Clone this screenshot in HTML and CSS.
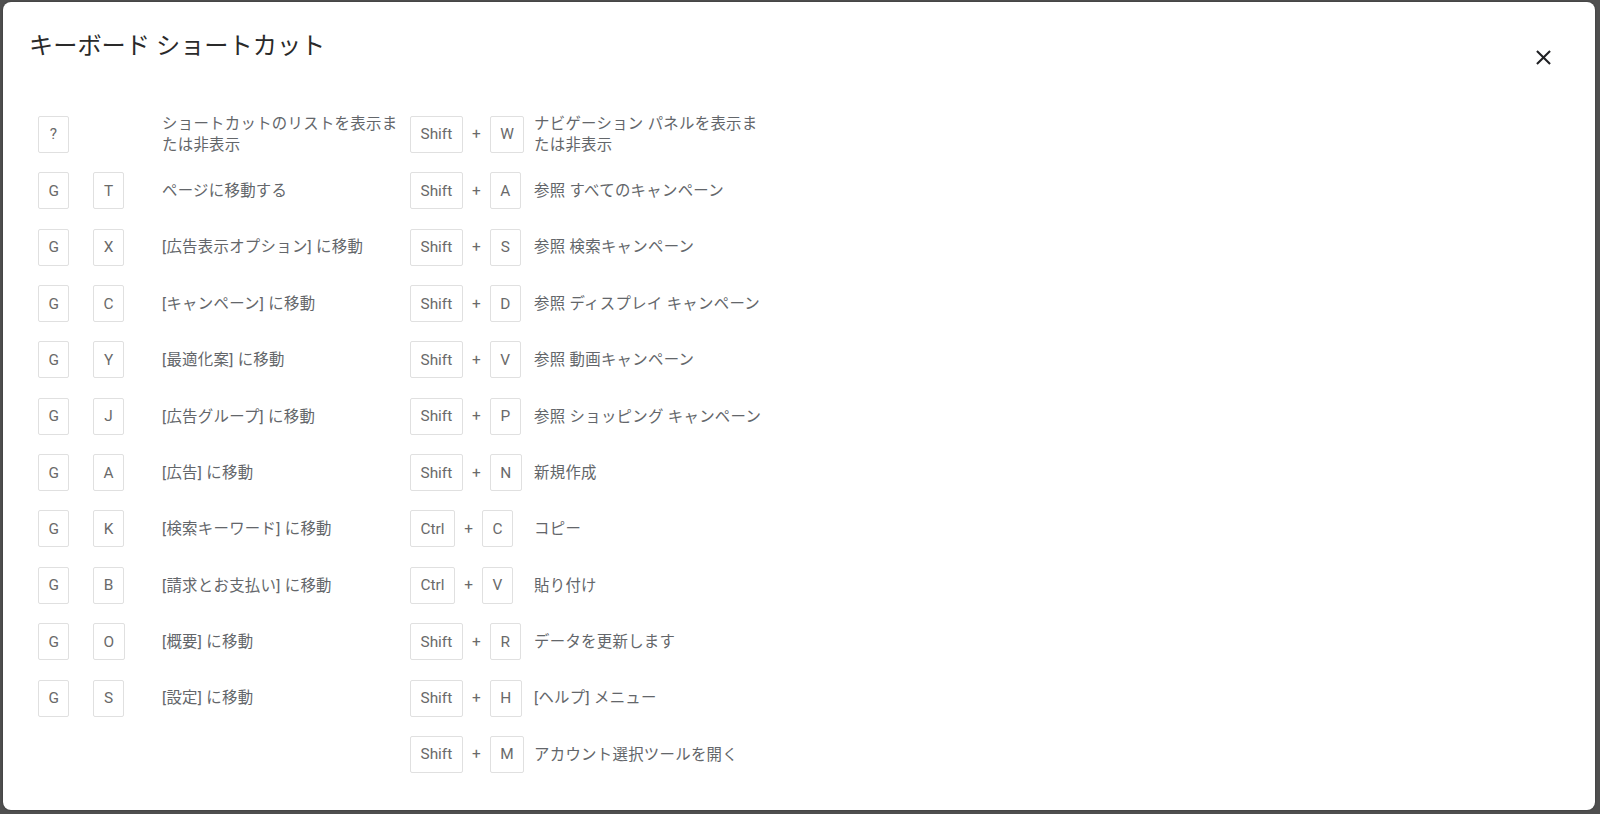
FILE: index.html
```html
<!DOCTYPE html>
<html lang="ja">
<head>
<meta charset="utf-8">
<title>キーボード ショートカット</title>
<link rel="stylesheet" href="styles.css">
</head>
<body>
<div class="dialog">
  <div class="header">
    <h1 class="title">キーボード ショートカット</h1>
    <button class="close" aria-label="閉じる">
      <svg viewBox="0 0 24 24" width="25" height="25"><path d="M19 6.41L17.59 5 12 10.59 6.41 5 5 6.41 10.59 12 5 17.59 6.41 19 12 13.41 17.59 19 19 17.59 13.41 12z" fill="#202124"/></svg>
    </button>
  </div>
  <div class="shortcuts">
    <div class="col col-left">
      <div class="row"><span class="key">?</span><span></span><span class="desc">ショートカットのリストを表示または非表示</span></div>
      <div class="row"><span class="key">G</span><span class="key">T</span><span class="desc">ページに移動する</span></div>
      <div class="row"><span class="key">G</span><span class="key">X</span><span class="desc">[広告表示オプション] に移動</span></div>
      <div class="row"><span class="key">G</span><span class="key">C</span><span class="desc">[キャンペーン] に移動</span></div>
      <div class="row"><span class="key">G</span><span class="key">Y</span><span class="desc">[最適化案] に移動</span></div>
      <div class="row"><span class="key">G</span><span class="key">J</span><span class="desc">[広告グループ] に移動</span></div>
      <div class="row"><span class="key">G</span><span class="key">A</span><span class="desc">[広告] に移動</span></div>
      <div class="row"><span class="key">G</span><span class="key">K</span><span class="desc">[検索キーワード] に移動</span></div>
      <div class="row"><span class="key">G</span><span class="key">B</span><span class="desc">[請求とお支払い] に移動</span></div>
      <div class="row"><span class="key">G</span><span class="key">O</span><span class="desc">[概要] に移動</span></div>
      <div class="row"><span class="key">G</span><span class="key">S</span><span class="desc">[設定] に移動</span></div>
    </div>
    <div class="col col-right">
      <div class="row"><span class="combo"><span class="key">Shift</span><span class="plus">+</span><span class="key">W</span></span><span class="desc">ナビゲーション パネルを表示または非表示</span></div>
      <div class="row"><span class="combo"><span class="key">Shift</span><span class="plus">+</span><span class="key">A</span></span><span class="desc">参照 すべてのキャンペーン</span></div>
      <div class="row"><span class="combo"><span class="key">Shift</span><span class="plus">+</span><span class="key">S</span></span><span class="desc">参照 検索キャンペーン</span></div>
      <div class="row"><span class="combo"><span class="key">Shift</span><span class="plus">+</span><span class="key">D</span></span><span class="desc">参照 ディスプレイ キャンペーン</span></div>
      <div class="row"><span class="combo"><span class="key">Shift</span><span class="plus">+</span><span class="key">V</span></span><span class="desc">参照 動画キャンペーン</span></div>
      <div class="row"><span class="combo"><span class="key">Shift</span><span class="plus">+</span><span class="key">P</span></span><span class="desc">参照 ショッピング キャンペーン</span></div>
      <div class="row"><span class="combo"><span class="key">Shift</span><span class="plus">+</span><span class="key">N</span></span><span class="desc">新規作成</span></div>
      <div class="row"><span class="combo"><span class="key">Ctrl</span><span class="plus">+</span><span class="key">C</span></span><span class="desc">コピー</span></div>
      <div class="row"><span class="combo"><span class="key">Ctrl</span><span class="plus">+</span><span class="key">V</span></span><span class="desc">貼り付け</span></div>
      <div class="row"><span class="combo"><span class="key">Shift</span><span class="plus">+</span><span class="key">R</span></span><span class="desc">データを更新します</span></div>
      <div class="row"><span class="combo"><span class="key">Shift</span><span class="plus">+</span><span class="key">H</span></span><span class="desc">[ヘルプ] メニュー</span></div>
      <div class="row"><span class="combo"><span class="key">Shift</span><span class="plus">+</span><span class="key">M</span></span><span class="desc">アカウント選択ツールを開く</span></div>
    </div>
  </div>
</div>
</body>
</html>
```

FILE: styles.css
```css
html, body {
  margin: 0;
  padding: 0;
}
body {
  width: 1600px;
  height: 814px;
  overflow: hidden;
  background: #4f4f4f;
  font-family: Roboto, "Noto Sans CJK JP", sans-serif;
  padding: 2px 5px 4px 3px;
  box-sizing: border-box;
}
.dialog {
  width: 1592px;
  height: 808px;
  background: #fff;
  border-radius: 8px;
  box-shadow: 0 0 2px rgba(0,0,0,0.4);
  box-sizing: border-box;
}
.header {
  display: flex;
  justify-content: space-between;
  align-items: flex-start;
  height: 104.3px;
  padding: 28px 32px 0 26px;
  box-sizing: border-box;
}
.title {
  margin: 0;
  font-size: 24.2px;
  line-height: 32px;
  font-weight: 400;
  color: #2a2a2a;
  font-family: Roboto, "Noto Sans CJK JP", sans-serif;
}
.close {
  margin-top: 7px;
  width: 40px;
  height: 40px;
  border: 0;
  padding: 0;
  background: transparent;
  display: flex;
  align-items: center;
  justify-content: center;
  cursor: pointer;
}
.shortcuts {
  display: flex;
  gap: 11px;
  padding-left: 35px;
}
.col {
  display: flex;
  flex-direction: column;
}
.row {
  display: grid;
  height: 56.36px;
  align-items: center;
  justify-items: start;
}
.col-left .row {
  grid-template-columns: 55px 69px 237px;
}
.col-right .row {
  grid-template-columns: 124px 237px;
}
.combo {
  display: flex;
  align-items: center;
}
.key {
  display: inline-flex;
  align-items: center;
  justify-content: center;
  min-width: 31px;
  height: 37px;
  box-sizing: border-box;
  padding: 0 9.5px;
  border: 1px solid #e0e0e0;
  border-radius: 2px;
  font-size: 15.4px;
  color: #6a6a6a;
  font-family: Roboto, sans-serif;
}
.plus {
  width: 27px;
  text-align: center;
  font-size: 15.4px;
  color: #6a6a6a;
}
.desc {
  font-size: 15.4px;
  line-height: 21.5px;
  letter-spacing: 0.3px;
  padding-top: 2px;
  color: #63666a;
  width: 237px;
}
```
